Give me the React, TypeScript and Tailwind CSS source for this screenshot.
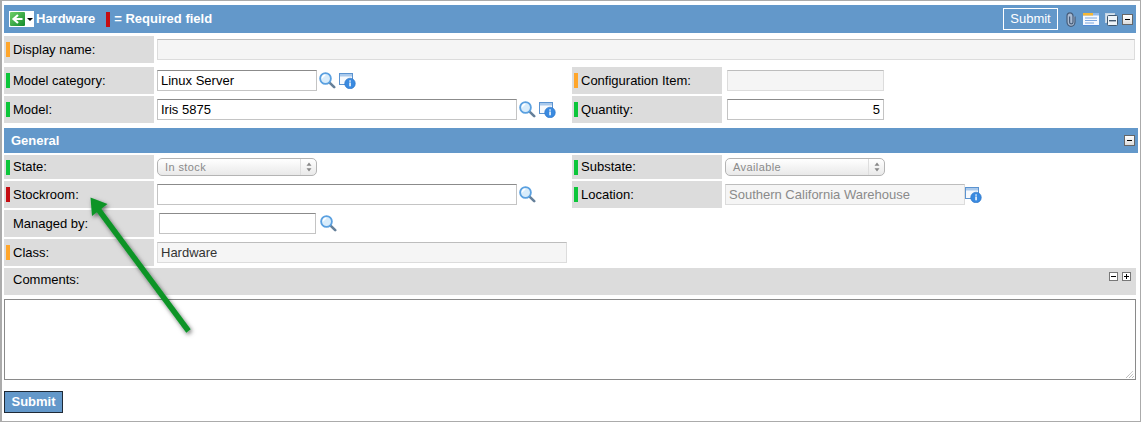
import React from 'react';

const FONT = "font-['Liberation_Sans',Arial,sans-serif]";

const Bar = ({ color }: { color?: string }) => (
  <span className={`mr-[3px] h-[15px] w-1 shrink-0 ${color ?? ''}`} />
);

const Label = ({ text, color }: { text: string; color?: string }) => (
  <div className="flex h-full w-[150px] shrink-0 items-center bg-[#dcdcdc] pl-0.5">
    <Bar color={color} />
    <span className="text-[13px] text-black">{text}</span>
  </div>
);

const MagnifierIcon = ({ className }: { className: string }) => (
  <svg width="17" height="17" viewBox="0 0 17 17" className={`shrink-0 ${className}`}>
    <path d="M10.8 10.8 L15.2 15.2" stroke="#66809a" strokeWidth="2.6" strokeLinecap="round" />
    <circle cx="6.500" cy="6.500" r="5.400" fill="#d8ecfb" stroke="#5aa0e0" strokeWidth="1.8" />
    <path d="M3.300 6.200a3.300 3.300 0 0 1 3-3" fill="none" stroke="#fff" strokeWidth="1.400" />
  </svg>
);

const InfoWindowIcon = ({ className }: { className?: string }) => (
  <svg width="17" height="16" viewBox="0 0 17 16" className={`shrink-0 ${className ?? ''}`}>
    <rect x="0.5" y="0.5" width="13" height="11" fill="#f6f9fd" stroke="#5b93d0" />
    <rect x="1" y="1" width="12" height="2.5" fill="#a9c9ec" />
    <circle cx="11" cy="10.500" r="5.300" fill="#3a8ae0" stroke="#2a72c4" strokeWidth="0.6" />
    <rect x="10.300" y="9.500" width="1.500" height="3.800" fill="#fff" />
    <rect x="10.300" y="7.400" width="1.500" height="1.300" fill="#fff" />
  </svg>
);

const TextInput = ({ value, className }: { value?: string; className: string }) => (
  <div
    className={`box-border flex h-[21px] shrink-0 items-center border border-[#c4c4c4] border-t-[#8b8b8b] bg-white px-[3px] text-[13px] text-black ${className}`}
  >
    {value}
  </div>
);

const ReadOnlyInput = ({ value, className }: { value?: string; className: string }) => (
  <div
    className={`box-border flex h-[21px] shrink-0 items-center border border-[#dcdcdc] border-t-[#bdbdbd] bg-[#f5f5f5] px-[3px] text-[13px] ${className}`}
  >
    {value}
  </div>
);

const SelectBox = ({ value, className }: { value: string; className: string }) => (
  <div
    className={`box-border flex h-[18px] shrink-0 items-center justify-between rounded-[5px] border border-[#b4b4b4] bg-gradient-to-b from-white to-[#e9e9e9] pl-[7px] text-[11px] tracking-[0.4px] text-[#8a8a8a] ${className}`}
  >
    <span>{value}</span>
    <span className="flex h-full w-4 items-center justify-center border-l border-[#dedede]">
      <svg width="6" height="10" viewBox="0 0 6 10">
        <path d="M3 0.5 L5.500 3.800 H0.500 Z M3 9.500 L5.500 6.200 H0.500 Z" fill="#888" />
      </svg>
    </span>
  </div>
);

const Toggle = ({ className }: { className?: string }) => (
  <span
    className={`relative block h-[11px] w-[11px] shrink-0 border border-[#666] bg-gradient-to-b from-white to-[#dcdcdc] ${className ?? ''}`}
  >
    <span className="absolute left-[2px] top-1 h-px w-[5px] bg-black" />
  </span>
);

const SmallToggle = ({ plus }: { plus?: boolean }) => (
  <span className="relative block h-[9px] w-[9px] shrink-0 border border-[#777] bg-white">
    <span className="absolute left-px top-[3px] h-px w-[5px] bg-black" />
    {plus && <span className="absolute left-[3px] top-px h-[5px] w-px bg-black" />}
  </span>
);

const BackIcon = () => (
  <svg width="15" height="14" viewBox="0 0 15 14">
    <defs>
      <linearGradient id="back" x1="0" y1="0" x2="1" y2="1">
        <stop offset="0" stopColor="#6fd06a" />
        <stop offset="1" stopColor="#138a2a" />
      </linearGradient>
    </defs>
    <rect width="15" height="14" rx="1" fill="url(#back)" />
    <path d="M12.500 7 H4.500 M8 3 L3.500 7 L8 11" fill="none" stroke="#fff" strokeWidth="2.200" />
  </svg>
);

const PaperclipIcon = () => (
  <svg width="10" height="15" viewBox="0 0 10 15" className="ml-2 shrink-0">
    <path
      d="M9 4.500V10a4 4.300 0 0 1-8 0V4a3 3.200 0 0 1 6 0v6.200a1.700 1.700 0 0 1-3.400 0V4.500"
      fill="#a9bbd2"
      stroke="#465c79"
      strokeWidth="1.200"
    />
  </svg>
);

const NotesIcon = () => (
  <svg width="16" height="13" viewBox="0 0 16 13" className="ml-[7px] shrink-0">
    <rect width="16" height="13" fill="#f6f9ff" />
    <rect width="16" height="2.500" fill="#8fb8ea" />
    <rect width="10" height="2.500" fill="#f7b733" />
    <path d="M2 5h12M2 7.500h12M2 10h9" stroke="#7ba6de" strokeWidth="1" />
    <rect y="12" width="16" height="1" fill="#4f8ad6" />
  </svg>
);

const CollapseIcon = () => (
  <svg width="13" height="13" viewBox="0 0 13 13" className="ml-[6px] shrink-0">
    <rect x="0.5" y="0.5" width="9" height="9" fill="#d8e6f2" stroke="#c4d4e2" />
    <rect x="2.500" y="2.500" width="10" height="10" rx="1" fill="#eef4f8" stroke="#41586e" />
    <rect x="4" y="7" width="7" height="1.400" fill="#41586e" />
  </svg>
);

const Row = ({ className, children }: { className: string; children: React.ReactNode }) => (
  <div className={`flex items-center ${className}`}>{children}</div>
);

const Cell = ({ children }: { children: React.ReactNode }) => (
  <div className="flex h-full w-[568px] shrink-0 items-center">{children}</div>
);

export default function App() {
  return (
    <div className={`relative box-border h-[422px] w-[1141px] overflow-hidden border border-l-2 border-[#ababab] px-0.5 pt-1 ${FONT}`}>
      <div className="flex h-[28px] w-[1132px] items-center bg-[#6398ca] pl-[5px] pr-[3px]">
        <span className="flex h-4 w-[25px] items-center bg-white pl-px">
          <BackIcon />
          <svg width="6" height="3" viewBox="0 0 6 3" className="ml-[2px]">
            <path d="M0 0h6L3 3z" fill="#000" />
          </svg>
        </span>
        <span className="ml-[2px] text-[13px] font-bold text-white">Hardware</span>
        <span className="ml-[11px] h-[15px] w-1 bg-[#c50d12]" />
        <span className="ml-1 text-[13px] font-bold text-white">= Required field</span>
        <span className="ml-auto flex h-[22px] w-[55px] items-center justify-center border border-white text-[13px] text-white">
          Submit
        </span>
        <PaperclipIcon />
        <NotesIcon />
        <CollapseIcon />
        <Toggle className="ml-1" />
      </div>

      <Row className="mt-[3px] h-[27px]">
        <Label text="Display name:" color="bg-[#ffa62b]" />
        <ReadOnlyInput className="ml-[3px] w-[978px]" />
      </Row>

      <Row className="mt-1 h-[27px]">
        <Cell>
          <Label text="Model category:" color="bg-[#0cc63a]" />
          <TextInput className="ml-[3px] w-[160px]" value="Linux Server" />
          <MagnifierIcon className="ml-[2px]" />
          <InfoWindowIcon className="ml-[3px]" />
        </Cell>
        <Label text="Configuration Item:" color="bg-[#ffa62b]" />
        <ReadOnlyInput className="ml-[5px] w-[157px]" />
      </Row>

      <Row className="mt-0.5 h-[27px]">
        <Cell>
          <Label text="Model:" color="bg-[#0cc63a]" />
          <TextInput className="ml-[3px] w-[360px]" value="Iris 5875" />
          <MagnifierIcon className="ml-[2px]" />
          <InfoWindowIcon className="ml-[3px]" />
        </Cell>
        <Label text="Quantity:" color="bg-[#0cc63a]" />
        <TextInput className="ml-[5px] w-[157px] justify-end" value="5" />
      </Row>

      <div className="mt-[5px] flex h-[25px] w-[1134px] items-center bg-[#6398ca] pl-[7px] pr-[3px]">
        <span className="text-[13px] font-bold text-white">General</span>
        <Toggle className="ml-auto" />
      </div>

      <Row className="mt-0.5 h-[24px]">
        <Cell>
          <Label text="State:" color="bg-[#0cc63a]" />
          <SelectBox className="ml-[3px] w-[160px]" value="In stock" />
        </Cell>
        <Label text="Substate:" color="bg-[#0cc63a]" />
        <SelectBox className="ml-[3px] w-[160px]" value="Available" />
      </Row>

      <Row className="mt-0.5 h-[27px]">
        <Cell>
          <Label text="Stockroom:" color="bg-[#c50d12]" />
          <TextInput className="ml-[3px] w-[360px]" />
          <MagnifierIcon className="ml-[2px]" />
        </Cell>
        <Label text="Location:" color="bg-[#0cc63a]" />
        <ReadOnlyInput className="ml-[3px] w-[240px] text-[#8a8a8a]" value="Southern California Warehouse" />
        <InfoWindowIcon />
      </Row>

      <Row className="mt-0.5 h-[27px]">
        <Label text="Managed by:" />
        <TextInput className="ml-[5px] w-[157px]" />
        <MagnifierIcon className="ml-1" />
      </Row>

      <Row className="mt-0.5 h-[27px]">
        <Label text="Class:" color="bg-[#ffa62b]" />
        <ReadOnlyInput className="ml-[3px] w-[410px] text-[#333]" value="Hardware" />
      </Row>

      <div className="mt-0.5 flex h-[27px] w-[1132px] items-start justify-between bg-[#dcdcdc] pl-[9px] pr-[5px]">
        <span className="mt-0.5 text-[13px] text-black">Comments:</span>
        <span className="mt-1 flex gap-1">
          <SmallToggle />
          <SmallToggle plus />
        </span>
      </div>

      <div className="relative mt-1 h-[81px] w-[1132px] border border-[#8a8a8a] bg-white">
        <svg width="10" height="10" viewBox="0 0 10 10" className="absolute bottom-0 right-0">
          <path d="M1 9 L8 2 M4 9 L8.500 4.500 M7 9 L9 7" stroke="#8a8a8a" strokeWidth="0.8" strokeDasharray="1 0.6" />
        </svg>
      </div>

      <button className="mt-[11px] flex h-[22px] w-[59px] items-center justify-center border border-[#1f2a36] bg-[#6398ca] text-[13px] font-bold text-white">
        Submit
      </button>

      {/* annotation arrow, lies over the form */}
      <svg width="1141" height="422" viewBox="0 0 1141 422" className="pointer-events-none absolute -left-0.5 -top-px">
        <defs>
          <filter id="arrow-shadow" x="-20%" y="-20%" width="140%" height="140%">
            <feDropShadow dx="1.5" dy="2" stdDeviation="2" floodColor="#000" floodOpacity="0.55" />
          </filter>
        </defs>
        <g filter="url(#arrow-shadow)">
          <path d="M188.500 331 L98 209" stroke="#0a9428" strokeWidth="5.500" fill="none" />
          <path d="M90.500 197.500 L107.500 204 L92 216 Z" fill="#0a9428" />
        </g>
      </svg>
    </div>
  );
}
